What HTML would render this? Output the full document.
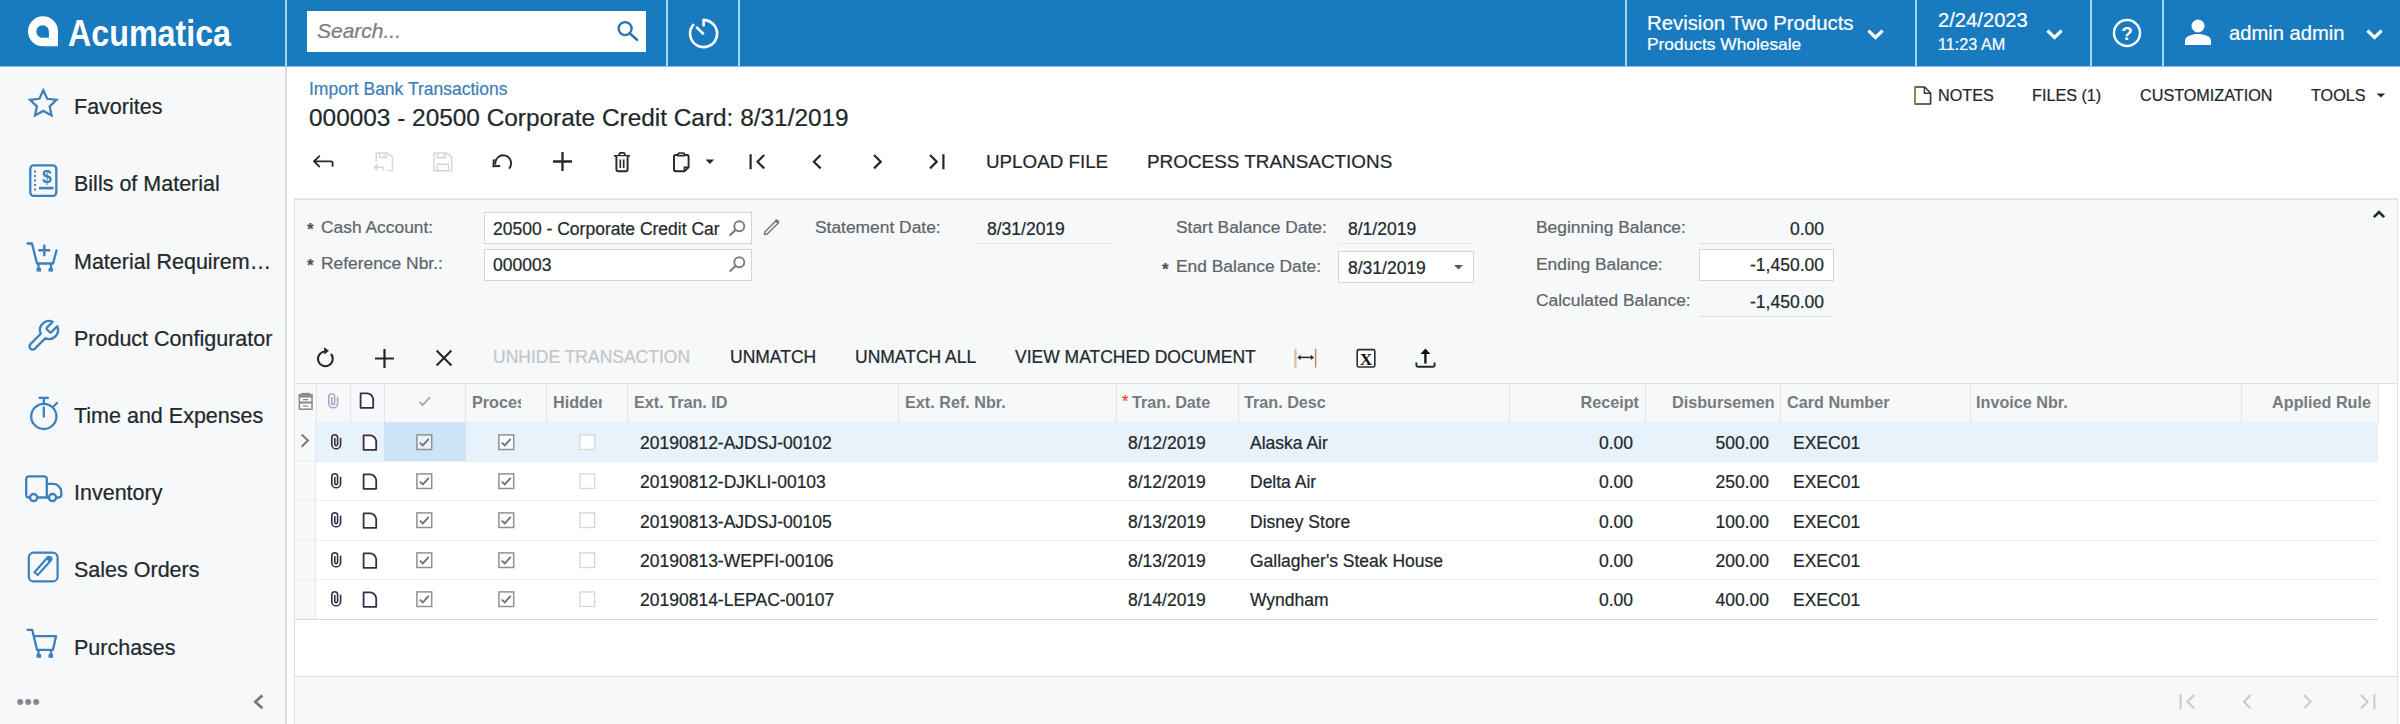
<!DOCTYPE html>
<html>
<head>
<meta charset="utf-8">
<title>Import Bank Transactions</title>
<style>
*{box-sizing:border-box;margin:0;padding:0}
html,body{width:2400px;height:724px;overflow:hidden;background:#fff}
body{font-family:"Liberation Sans",sans-serif;color:#23282c;position:relative}
.abs{position:absolute}
.t{position:absolute;white-space:nowrap;line-height:1;-webkit-text-stroke:0.22px currentColor}
svg{position:absolute;overflow:visible}
/* header */
#hdr{position:absolute;left:0;top:0;width:2400px;height:67px;background:#187abf;border-bottom:1px solid #8bbcdf}
.vsep{position:absolute;top:0;width:2px;height:66px;background:#a4d6f6}
.hw{color:#fff}
/* sidebar */
#side{position:absolute;left:0;top:67px;width:287px;height:657px;background:#f6f8fa;border-right:2px solid #dbdcde}
.nav{font-size:21.5px;color:#23282c}
/* main */
.lbl{font-size:17.4px;color:#5f6469}
.val{font-size:17.5px;color:#23282c}
.btn{font-size:17.5px;color:#23282c}
.inp{position:absolute;background:#fff;border:1px solid #d2d6da}
.dot{position:absolute;height:0;border-top:1px dotted #d3d6d9}
.gh{font-size:16.2px;font-weight:bold;color:#777b7f;-webkit-text-stroke:0 transparent}
.cell{font-size:17.5px;color:#23282c}
.cs{position:absolute;top:384px;width:1px;height:38px;background:#e3e6e9}
.rowline{position:absolute;left:294px;width:2084px;height:1px;background:#e8eef3}
</style>
</head>
<body>

<!-- ================= HEADER ================= -->
<div id="hdr">
  <div class="vsep" style="left:285px"></div>
  <div class="vsep" style="left:666px"></div>
  <div class="vsep" style="left:738px"></div>
  <div class="vsep" style="left:1625px"></div>
  <div class="vsep" style="left:1915px"></div>
  <div class="vsep" style="left:2090px"></div>
  <div class="vsep" style="left:2162px"></div>

  <!-- logo -->
  <svg style="left:27px;top:16px" width="32" height="31" viewBox="0 0 32 31">
    <path d="M16 0.3 A15 15 0 0 1 31 15.3 V30.3 H16 A15 15 0 0 1 16 0.3 Z" fill="#fff"/>
    <path d="M15.6 9.2 A6.3 6.3 0 0 1 21.9 15.5 V21.8 H15.6 A6.3 6.3 0 0 1 15.6 9.2 Z" fill="#187abf"/>
  </svg>
  <svg style="left:68px;top:14px" width="166" height="40" viewBox="0 0 166 40">
    <text x="0" y="32" font-family="Liberation Sans, sans-serif" font-weight="bold" font-size="37" fill="#fff" textLength="163" lengthAdjust="spacingAndGlyphs">Acumatica</text>
  </svg>

  <!-- search -->
  <div class="abs" style="left:307px;top:11px;width:339px;height:41px;background:#fff"></div>
  <div class="t" style="left:317px;top:20px;font-size:21px;font-style:italic;color:#7b7f83">Search...</div>
  <svg style="left:616px;top:19px" width="26" height="26" viewBox="0 0 26 26">
    <circle cx="9.1" cy="9.6" r="6.5" fill="none" stroke="#2f72ad" stroke-width="2.4"/>
    <path d="M13.8 14.4 L21 20.8" stroke="#2f72ad" stroke-width="2.6" stroke-linecap="round"/>
  </svg>

  <!-- clock -->
  <svg style="left:688px;top:17px" width="32" height="32" viewBox="0 0 32 32">
    <path d="M15.6 3.1 A13.5 13.5 0 1 1 6 7.1" fill="none" stroke="#fff" stroke-width="2.6" stroke-linecap="butt"/>
    <path d="M15.6 1.8 V9.4" stroke="#fff" stroke-width="2.6"/>
    <path d="M8.2 10 L15.8 17.2" stroke="#fff" stroke-width="2.6" stroke-linecap="butt"/>
  </svg>

  <!-- company -->
  <div class="t hw" style="left:1647px;top:13px;font-size:20.35px">Revision Two Products</div>
  <div class="t hw" style="left:1647px;top:36px;font-size:17.35px">Products Wholesale</div>
  <svg style="left:1866px;top:29px" width="20" height="12" viewBox="0 0 20 12"><path d="M2.4 1.6 L9.5 8.4 L16.6 1.6" fill="none" stroke="#fff" stroke-width="3.3" stroke-linecap="butt" stroke-linejoin="miter"/></svg>

  <!-- date -->
  <div class="t hw" style="left:1938px;top:10px;font-size:20.2px">2/24/2023</div>
  <div class="t hw" style="left:1938px;top:36px;font-size:16.2px">11:23 AM</div>
  <svg style="left:2045px;top:29px" width="20" height="12" viewBox="0 0 20 12"><path d="M2.4 1.6 L9.5 8.4 L16.6 1.6" fill="none" stroke="#fff" stroke-width="3.3" stroke-linecap="butt" stroke-linejoin="miter"/></svg>

  <!-- help -->
  <svg style="left:2112px;top:18px" width="30" height="30" viewBox="0 0 30 30">
    <circle cx="15" cy="15" r="13" fill="none" stroke="#fff" stroke-width="2.4"/>
    <text x="15" y="22" text-anchor="middle" font-family="Liberation Sans, sans-serif" font-weight="bold" font-size="19" fill="#fff">?</text>
  </svg>

  <!-- user -->
  <svg style="left:2184px;top:19px" width="28" height="26" viewBox="0 0 28 26">
    <circle cx="14" cy="7" r="6.5" fill="#fff"/>
    <path d="M1 26 L1 22 C1 17 8 15 14 15 C20 15 27 17 27 22 L27 26 Z" fill="#fff"/>
  </svg>
  <div class="t hw" style="left:2229px;top:23px;font-size:20.2px">admin admin</div>
  <svg style="left:2365px;top:29px" width="20" height="12" viewBox="0 0 20 12"><path d="M2.4 1.6 L9.5 8.4 L16.6 1.6" fill="none" stroke="#fff" stroke-width="3.3" stroke-linecap="butt" stroke-linejoin="miter"/></svg>
</div>

<!-- ================= SIDEBAR ================= -->
<div id="side"></div>
<div id="navitems">
  <div class="t nav" style="left:74px;top:97px">Favorites</div>
  <div class="t nav" style="left:74px;top:174px">Bills of Material</div>
  <div class="t nav" style="left:74px;top:252px">Material Requirem…</div>
  <div class="t nav" style="left:74px;top:329px">Product Configurator</div>
  <div class="t nav" style="left:74px;top:406px">Time and Expenses</div>
  <div class="t nav" style="left:74px;top:483px">Inventory</div>
  <div class="t nav" style="left:74px;top:560px">Sales Orders</div>
  <div class="t nav" style="left:74px;top:638px">Purchases</div>
</div>


<!-- SIDE-ICONS-START -->
<div id="sideicons">
  <!-- star -->
  <svg style="left:27px;top:87px" width="33" height="32" viewBox="0 0 33 32">
    <path d="M16.3 3.3 L20.2 11.8 L29.5 12.9 L22.7 19.3 L24.5 28.4 L16.3 23.9 L8.1 28.4 L9.9 19.3 L3.1 12.9 L12.4 11.8 Z" fill="none" stroke="#3c80bd" stroke-width="2.3" stroke-linejoin="miter"/>
  </svg>
  <!-- bills of material -->
  <svg style="left:28px;top:163px" width="31" height="35" viewBox="0 0 31 35">
    <rect x="2.3" y="2.4" width="26" height="30.5" rx="3.5" fill="none" stroke="#3c80bd" stroke-width="2.3"/>
    <g fill="#3c80bd"><rect x="6" y="7.5" width="2" height="2"/><rect x="6" y="12" width="2" height="2"/><rect x="6" y="16.5" width="2" height="2"/><rect x="6" y="21" width="2" height="2"/><rect x="6" y="25.5" width="2" height="2"/></g>
    <text x="18.8" y="20.4" text-anchor="middle" font-family="Liberation Sans, sans-serif" font-weight="bold" font-size="17.5" fill="#3c80bd">$</text>
    <rect x="11" y="23.8" width="14.5" height="2.6" fill="#3c80bd"/>
  </svg>
  <!-- material requirements: cart with plus -->
  <svg style="left:26px;top:241px" width="34" height="32" viewBox="0 0 34 32">
    <path d="M1.5 2.5 H6 L11 22.5 H27 L30.5 9.5" fill="none" stroke="#3c80bd" stroke-width="2.3" stroke-linejoin="round" stroke-linecap="round"/>
    <path d="M18.3 3.4 V15.2 M12.4 9.3 H24.2" stroke="#3c80bd" stroke-width="2.4" fill="none"/>
    <path d="M12.5 23 V28 M25 23 V28" stroke="#3c80bd" stroke-width="2.3"/>
    <rect x="10.5" y="27" width="4.5" height="3.6" fill="#3c80bd"/><rect x="22.5" y="27" width="4.5" height="3.6" fill="#3c80bd"/>
  </svg>
  <!-- wrench -->
  <svg style="left:24.5px;top:318px" width="36" height="36" viewBox="0 0 24 24">
    <path d="M14.7 6.3a1 1 0 0 0 0 1.4l1.6 1.6a1 1 0 0 0 1.4 0l3.77-3.77a6 6 0 0 1-7.94 7.94l-6.91 6.91a2.12 2.12 0 0 1-3-3l6.91-6.91a6 6 0 0 1 7.94-7.94l-3.76 3.76z" fill="none" stroke="#3c80bd" stroke-width="1.55" stroke-linejoin="round" stroke-linecap="round"/>
  </svg>
  <!-- stopwatch -->
  <svg style="left:27px;top:395px" width="34" height="36" viewBox="0 0 34 36">
    <circle cx="16.8" cy="21.4" r="12.6" fill="none" stroke="#3c80bd" stroke-width="2.3"/>
    <path d="M12.5 2.8 H21 M16.8 2.8 V8.5 M16.8 12.5 V21.5 M26.5 11.5 L30 8" stroke="#3c80bd" stroke-width="2.3" fill="none" stroke-linecap="round"/>
  </svg>
  <!-- truck -->
  <svg style="left:24px;top:474px" width="40" height="30" viewBox="0 0 40 30">
    <path d="M5.2 23.5 H4.5 A2.6 2.6 0 0 1 2.2 21 V5 A2.6 2.6 0 0 1 4.8 2.4 H20.2 A2.6 2.6 0 0 1 22.8 5 V23.5 H14" fill="none" stroke="#3c80bd" stroke-width="2.3" stroke-linejoin="round"/>
    <path d="M22.8 9.8 H29.5 C34 9.8 37.3 14 37.3 18.5 V21 A2.5 2.5 0 0 1 34.8 23.5 H33 M24 23.5 H22.8" fill="none" stroke="#3c80bd" stroke-width="2.3"/>
    <circle cx="9.6" cy="23.6" r="3.6" fill="none" stroke="#3c80bd" stroke-width="2.3"/>
    <circle cx="28.5" cy="23.6" r="3.6" fill="none" stroke="#3c80bd" stroke-width="2.3"/>
  </svg>
  <!-- sales orders -->
  <svg style="left:26px;top:550px" width="34" height="34" viewBox="0 0 34 34">
    <rect x="2.8" y="2.6" width="28.8" height="28.8" rx="5" fill="none" stroke="#3c80bd" stroke-width="2.2"/>
    <path d="M9.5 24.5 L22.5 9.8 A2.2 2.2 0 0 1 25.8 12.8 L12.8 27.3 Z" fill="none" stroke="#3c80bd" stroke-width="2.1" stroke-linejoin="round" transform="translate(-1 -2.3)"/>
    <path d="M21.2 8.6 L24.6 11.6" stroke="#3c80bd" stroke-width="3.2" transform="translate(-0.5 -1)"/>
  </svg>
  <!-- purchases cart -->
  <svg style="left:26px;top:627px" width="34" height="32" viewBox="0 0 34 32">
    <path d="M1.5 2.8 H6.2 L11 22.8 H27 L30 9.2 H8" fill="none" stroke="#3c80bd" stroke-width="2.3" stroke-linejoin="round" stroke-linecap="round"/>
    <path d="M12.5 23 V28 M25 23 V28" stroke="#3c80bd" stroke-width="2.3"/>
    <rect x="10.5" y="27" width="4.5" height="3.8" fill="#3c80bd"/><rect x="22.5" y="27" width="4.5" height="3.8" fill="#3c80bd"/>
  </svg>
  <!-- dots + collapse -->
  <svg style="left:17px;top:698px" width="24" height="8" viewBox="0 0 24 8"><circle cx="3.2" cy="4" r="3" fill="#85898e"/><circle cx="11.2" cy="4" r="3" fill="#85898e"/><circle cx="19.2" cy="4" r="3" fill="#85898e"/></svg>
  <svg style="left:252px;top:692px" width="14" height="20" viewBox="0 0 14 20"><path d="M10.4 3.4 L3.4 9.8 L10.4 16.2" fill="none" stroke="#777b80" stroke-width="2.8" stroke-linecap="butt" stroke-linejoin="miter"/></svg>
</div>
<!-- SIDE-ICONS-END -->

<!-- ================= MAIN ================= -->
<div id="main">
  <div class="t" style="left:309px;top:81px;font-size:17.5px;color:#3c7fb8">Import Bank Transactions</div>
  <div class="t" style="left:309px;top:106px;font-size:24.4px;color:#23282c">000003 - 20500 Corporate Credit Card: 8/31/2019</div>

  <!-- right top buttons -->
  <div class="t" style="left:1938px;top:87px;font-size:16.2px">NOTES</div>
  <div class="t" style="left:2032px;top:87px;font-size:16.2px">FILES (1)</div>
  <div class="t" style="left:2140px;top:87px;font-size:16.2px">CUSTOMIZATION</div>
  <div class="t" style="left:2311px;top:87px;font-size:16.2px">TOOLS</div>

  <!-- toolbar text -->
  <div class="t" style="left:986px;top:153px;font-size:18.8px">UPLOAD FILE</div>
  <div class="t" style="left:1147px;top:153px;font-size:18.9px">PROCESS TRANSACTIONS</div>
</div>

<!-- ================= FORM PANEL ================= -->
<div class="abs" style="left:294px;top:198px;width:2104px;height:526px;background:#f6f8fa;border:1px solid #dfe2e5;border-bottom:none;border-top:2px solid #e1e3e6"></div>

<div id="form">
  <div class="t lbl" style="left:307px;top:221px;font-size:17px;font-weight:bold;color:#4d5155">*</div>
  <div class="t lbl" style="left:321px;top:219px">Cash Account:</div>
  <div class="inp" style="left:484px;top:212px;width:268px;height:32px"></div>
  <div class="t val" style="left:493px;top:221px">20500 - Corporate Credit Car</div>

  <div class="t lbl" style="left:307px;top:257px;font-size:17px;font-weight:bold;color:#4d5155">*</div>
  <div class="t lbl" style="left:321px;top:255px">Reference Nbr.:</div>
  <div class="inp" style="left:484px;top:249px;width:268px;height:32px"></div>
  <div class="t val" style="left:493px;top:257px">000003</div>

  <div class="t lbl" style="left:815px;top:219px">Statement Date:</div>
  <div class="t val" style="left:987px;top:221px">8/31/2019</div>
  <div class="dot" style="left:977px;top:243px;width:135px"></div>

  <div class="t lbl" style="left:1176px;top:219px">Start Balance Date:</div>
  <div class="t val" style="left:1348px;top:221px">8/1/2019</div>
  <div class="dot" style="left:1338px;top:243px;width:135px"></div>

  <div class="t lbl" style="left:1162px;top:261px;font-size:17px;font-weight:bold;color:#4d5155">*</div>
  <div class="t lbl" style="left:1176px;top:258px">End Balance Date:</div>
  <div class="inp" style="left:1338px;top:251px;width:136px;height:32px"></div>
  <div class="t val" style="left:1348px;top:260px">8/31/2019</div>

  <div class="t lbl" style="left:1536px;top:219px">Beginning Balance:</div>
  <div class="t val" style="right:576px;top:221px">0.00</div>
  <div class="dot" style="left:1699px;top:243px;width:135px;border-top-style:solid;border-color:#dfe2e5"></div>

  <div class="t lbl" style="left:1536px;top:256px">Ending Balance:</div>
  <div class="inp" style="left:1699px;top:249px;width:135px;height:32px"></div>
  <div class="t val" style="right:576px;top:257px">-1,450.00</div>

  <div class="t lbl" style="left:1536px;top:292px">Calculated Balance:</div>
  <div class="t val" style="right:576px;top:294px">-1,450.00</div>
  <div class="dot" style="left:1699px;top:316px;width:135px;border-top-style:solid;border-color:#dfe2e5"></div>
</div>

<!-- ================= GRID TOOLBAR ================= -->
<div id="gtb">
  <div class="t btn" style="left:493px;top:349px;color:#c3c6c9">UNHIDE TRANSACTION</div>
  <div class="t btn" style="left:730px;top:349px">UNMATCH</div>
  <div class="t btn" style="left:855px;top:349px">UNMATCH ALL</div>
  <div class="t btn" style="left:1015px;top:349px">VIEW MATCHED DOCUMENT</div>
</div>

<!-- ================= GRID ================= -->
<div id="grid">
  <!-- white body -->
  <div class="abs" style="left:295px;top:383px;width:2102px;height:293px;background:#fff"></div>
  <!-- header -->
  <div class="abs" style="left:295px;top:383px;width:2083px;height:39px;background:#f6f8fa;border-top:1px solid #dfe2e5"></div>
  <!-- indicator column -->
  <div class="abs" style="left:295px;top:422px;width:21px;height:197px;background:#f6f8fa;border-right:1px solid #e6e9ec"></div>
  <!-- selected row -->
  <div class="abs" style="left:316px;top:422px;width:2062px;height:40px;background:#e7f2fb"></div>
  <div class="abs" style="left:384px;top:422px;width:82px;height:40px;background:#cde4f7"></div>
  <!-- bottom lines -->
  <div class="abs" style="left:295px;top:619px;width:2083px;height:1px;background:#d5d8db"></div>
  <div class="abs" style="left:295px;top:676px;width:2102px;height:1px;background:#dfe2e5"></div>
  <div class="abs" style="left:2378px;top:383px;width:1px;height:39px;background:#e1e4e7"></div>
  <div class="abs" style="left:2378px;top:383px;width:19px;height:1px;background:#dfe2e5"></div>
</div>

<!-- GRID-CONTENT-START -->
<div id="gridc">
<div class="cs" style="left:316px"></div>
<div class="cs" style="left:350px"></div>
<div class="cs" style="left:384px"></div>
<div class="cs" style="left:465px"></div>
<div class="cs" style="left:546px"></div>
<div class="cs" style="left:627px"></div>
<div class="cs" style="left:898px"></div>
<div class="cs" style="left:1116px"></div>
<div class="cs" style="left:1238px"></div>
<div class="cs" style="left:1509px"></div>
<div class="cs" style="left:1645px"></div>
<div class="cs" style="left:1780px"></div>
<div class="cs" style="left:1970px"></div>
<div class="cs" style="left:2241px"></div>
<div class="abs" style="left:465px;top:384px;width:56px;height:38px;overflow:hidden"><div class="t gh" style="left:7px;top:10px">Processed</div></div>
<div class="abs" style="left:546px;top:384px;width:56px;height:38px;overflow:hidden"><div class="t gh" style="left:7px;top:10px">Hidden</div></div>
<div class="t gh" style="left:634px;top:394px;">Ext. Tran. ID</div>
<div class="t gh" style="left:905px;top:394px;">Ext. Ref. Nbr.</div>
<div class="t" style="left:1122px;top:393px;font-size:16.5px;color:#e0442e">*</div>
<div class="t gh" style="left:1132px;top:394px;">Tran. Date</div>
<div class="t gh" style="left:1244px;top:394px;">Tran. Desc</div>
<div class="t gh" style="right:761px;top:394px">Receipt</div>
<div class="abs" style="left:1645px;top:384px;width:128.5px;height:38px;overflow:hidden"><div class="t gh" style="left:27px;top:10px">Disbursement</div></div>
<div class="t gh" style="left:1787px;top:394px;">Card Number</div>
<div class="t gh" style="left:1976px;top:394px;">Invoice Nbr.</div>
<div class="t gh" style="right:29px;top:394px">Applied Rule</div>
<svg style="left:298px;top:392px" width="16" height="19" viewBox="0 0 16 19"><rect x="1.4" y="2.6" width="12.6" height="14.6" fill="#fff" stroke="#8a8e92" stroke-width="1.6"/><rect x="3.6" y="0.8" width="8.2" height="2.4" fill="#8a8e92"/><rect x="1.4" y="2.6" width="12.6" height="3" fill="#8a8e92"/><rect x="1.4" y="9.4" width="12.6" height="2.2" fill="#8a8e92"/><rect x="5" y="7" width="5.4" height="1.3" fill="#8a8e92"/><rect x="5" y="13.4" width="5.4" height="1.3" fill="#8a8e92"/></svg>
<svg style="left:326.6px;top:392.4px" width="13" height="18" viewBox="0 0 13 18"><path d="M10.6 5.4 V11.4 A4.4 4.4 0 0 1 1.8 11.4 V4.6 A2.9 2.9 0 0 1 7.6 4.6 V11.2 A1.4 1.4 0 0 1 4.8 11.2 V5.6" fill="none" stroke="#b4a3c2" stroke-width="1.6" stroke-linecap="round"/></svg>
<svg style="left:359.4px;top:392.2px" width="16" height="18" viewBox="0 0 16 18"><path d="M1.6 1.4 H8.6 C11.6 2 13.6 4 14.2 7 V15.8 H1.6 Z" fill="#fff" stroke="#3b2d45" stroke-width="1.8" stroke-linejoin="round"/></svg>
<svg style="left:418px;top:395px" width="14" height="13" viewBox="0 0 14 13"><path d="M1.4 6.8 L4.8 10 L12 2.2" fill="none" stroke="#a3a7ab" stroke-width="1.8"/></svg>
<svg style="left:299px;top:432px" width="12" height="17" viewBox="0 0 12 17"><path d="M2.6 2.4 L9 8.6 L2.6 14.8" fill="none" stroke="#7a7e82" stroke-width="2.1"/></svg>
<svg style="left:329.6px;top:432.9px" width="13" height="18" viewBox="0 0 13 18"><path d="M10.6 5.4 V11.4 A4.4 4.4 0 0 1 1.8 11.4 V4.6 A2.9 2.9 0 0 1 7.6 4.6 V11.2 A1.4 1.4 0 0 1 4.8 11.2 V5.6" fill="none" stroke="#3b2d45" stroke-width="1.6" stroke-linecap="round"/></svg>
<svg style="left:361.8px;top:433.7px" width="16" height="18" viewBox="0 0 16 18"><path d="M1.6 1.4 H8.6 C11.6 2 13.6 4 14.2 7 V15.8 H1.6 Z" fill="#fff" stroke="#3b2d45" stroke-width="1.8" stroke-linejoin="round"/></svg>
<svg style="left:416.2px;top:433.7px" width="17" height="17" viewBox="0 0 17 17"><rect x="0.9" y="0.9" width="14.8" height="14.6" fill="rgba(255,255,255,0.55)" stroke="#8e9296" stroke-width="1.5"/><path d="M3.8 8.6 L6.8 11.4 L12.8 4.8" fill="none" stroke="#6f7377" stroke-width="1.8"/></svg>
<svg style="left:497.6px;top:433.7px" width="17" height="17" viewBox="0 0 17 17"><rect x="0.9" y="0.9" width="14.8" height="14.6" fill="#fff" stroke="#8e9296" stroke-width="1.5"/><path d="M3.8 8.6 L6.8 11.4 L12.8 4.8" fill="none" stroke="#6f7377" stroke-width="1.8"/></svg>
<svg style="left:578.8px;top:433.7px" width="17" height="17" viewBox="0 0 17 17"><rect x="0.9" y="0.9" width="14.8" height="14.6" fill="#fff" stroke="#d6d9dc" stroke-width="1.4"/></svg>
<div class="t cell" style="left:640px;top:435px">20190812-AJDSJ-00102</div>
<div class="t cell" style="left:1128px;top:435px">8/12/2019</div>
<div class="t cell" style="left:1250px;top:435px">Alaska Air</div>
<div class="t cell" style="right:767px;top:435px">0.00</div>
<div class="t cell" style="right:631px;top:435px">500.00</div>
<div class="t cell" style="left:1793px;top:435px">EXEC01</div>
<div class="rowline" style="top:461px"></div>
<svg style="left:329.6px;top:472.1px" width="13" height="18" viewBox="0 0 13 18"><path d="M10.6 5.4 V11.4 A4.4 4.4 0 0 1 1.8 11.4 V4.6 A2.9 2.9 0 0 1 7.6 4.6 V11.2 A1.4 1.4 0 0 1 4.8 11.2 V5.6" fill="none" stroke="#3b2d45" stroke-width="1.6" stroke-linecap="round"/></svg>
<svg style="left:361.8px;top:472.90000000000003px" width="16" height="18" viewBox="0 0 16 18"><path d="M1.6 1.4 H8.6 C11.6 2 13.6 4 14.2 7 V15.8 H1.6 Z" fill="#fff" stroke="#3b2d45" stroke-width="1.8" stroke-linejoin="round"/></svg>
<svg style="left:416.2px;top:472.90000000000003px" width="17" height="17" viewBox="0 0 17 17"><rect x="0.9" y="0.9" width="14.8" height="14.6" fill="#fff" stroke="#8e9296" stroke-width="1.5"/><path d="M3.8 8.6 L6.8 11.4 L12.8 4.8" fill="none" stroke="#6f7377" stroke-width="1.8"/></svg>
<svg style="left:497.6px;top:472.90000000000003px" width="17" height="17" viewBox="0 0 17 17"><rect x="0.9" y="0.9" width="14.8" height="14.6" fill="#fff" stroke="#8e9296" stroke-width="1.5"/><path d="M3.8 8.6 L6.8 11.4 L12.8 4.8" fill="none" stroke="#6f7377" stroke-width="1.8"/></svg>
<svg style="left:578.8px;top:472.90000000000003px" width="17" height="17" viewBox="0 0 17 17"><rect x="0.9" y="0.9" width="14.8" height="14.6" fill="#fff" stroke="#d6d9dc" stroke-width="1.4"/></svg>
<div class="t cell" style="left:640px;top:474px">20190812-DJKLI-00103</div>
<div class="t cell" style="left:1128px;top:474px">8/12/2019</div>
<div class="t cell" style="left:1250px;top:474px">Delta Air</div>
<div class="t cell" style="right:767px;top:474px">0.00</div>
<div class="t cell" style="right:631px;top:474px">250.00</div>
<div class="t cell" style="left:1793px;top:474px">EXEC01</div>
<div class="rowline" style="top:500px"></div>
<svg style="left:329.6px;top:511.4px" width="13" height="18" viewBox="0 0 13 18"><path d="M10.6 5.4 V11.4 A4.4 4.4 0 0 1 1.8 11.4 V4.6 A2.9 2.9 0 0 1 7.6 4.6 V11.2 A1.4 1.4 0 0 1 4.8 11.2 V5.6" fill="none" stroke="#3b2d45" stroke-width="1.6" stroke-linecap="round"/></svg>
<svg style="left:361.8px;top:512.1999999999999px" width="16" height="18" viewBox="0 0 16 18"><path d="M1.6 1.4 H8.6 C11.6 2 13.6 4 14.2 7 V15.8 H1.6 Z" fill="#fff" stroke="#3b2d45" stroke-width="1.8" stroke-linejoin="round"/></svg>
<svg style="left:416.2px;top:512.1999999999999px" width="17" height="17" viewBox="0 0 17 17"><rect x="0.9" y="0.9" width="14.8" height="14.6" fill="#fff" stroke="#8e9296" stroke-width="1.5"/><path d="M3.8 8.6 L6.8 11.4 L12.8 4.8" fill="none" stroke="#6f7377" stroke-width="1.8"/></svg>
<svg style="left:497.6px;top:512.1999999999999px" width="17" height="17" viewBox="0 0 17 17"><rect x="0.9" y="0.9" width="14.8" height="14.6" fill="#fff" stroke="#8e9296" stroke-width="1.5"/><path d="M3.8 8.6 L6.8 11.4 L12.8 4.8" fill="none" stroke="#6f7377" stroke-width="1.8"/></svg>
<svg style="left:578.8px;top:512.1999999999999px" width="17" height="17" viewBox="0 0 17 17"><rect x="0.9" y="0.9" width="14.8" height="14.6" fill="#fff" stroke="#d6d9dc" stroke-width="1.4"/></svg>
<div class="t cell" style="left:640px;top:514px">20190813-AJDSJ-00105</div>
<div class="t cell" style="left:1128px;top:514px">8/13/2019</div>
<div class="t cell" style="left:1250px;top:514px">Disney Store</div>
<div class="t cell" style="right:767px;top:514px">0.00</div>
<div class="t cell" style="right:631px;top:514px">100.00</div>
<div class="t cell" style="left:1793px;top:514px">EXEC01</div>
<div class="rowline" style="top:540px"></div>
<svg style="left:329.6px;top:550.8px" width="13" height="18" viewBox="0 0 13 18"><path d="M10.6 5.4 V11.4 A4.4 4.4 0 0 1 1.8 11.4 V4.6 A2.9 2.9 0 0 1 7.6 4.6 V11.2 A1.4 1.4 0 0 1 4.8 11.2 V5.6" fill="none" stroke="#3b2d45" stroke-width="1.6" stroke-linecap="round"/></svg>
<svg style="left:361.8px;top:551.5999999999999px" width="16" height="18" viewBox="0 0 16 18"><path d="M1.6 1.4 H8.6 C11.6 2 13.6 4 14.2 7 V15.8 H1.6 Z" fill="#fff" stroke="#3b2d45" stroke-width="1.8" stroke-linejoin="round"/></svg>
<svg style="left:416.2px;top:551.5999999999999px" width="17" height="17" viewBox="0 0 17 17"><rect x="0.9" y="0.9" width="14.8" height="14.6" fill="#fff" stroke="#8e9296" stroke-width="1.5"/><path d="M3.8 8.6 L6.8 11.4 L12.8 4.8" fill="none" stroke="#6f7377" stroke-width="1.8"/></svg>
<svg style="left:497.6px;top:551.5999999999999px" width="17" height="17" viewBox="0 0 17 17"><rect x="0.9" y="0.9" width="14.8" height="14.6" fill="#fff" stroke="#8e9296" stroke-width="1.5"/><path d="M3.8 8.6 L6.8 11.4 L12.8 4.8" fill="none" stroke="#6f7377" stroke-width="1.8"/></svg>
<svg style="left:578.8px;top:551.5999999999999px" width="17" height="17" viewBox="0 0 17 17"><rect x="0.9" y="0.9" width="14.8" height="14.6" fill="#fff" stroke="#d6d9dc" stroke-width="1.4"/></svg>
<div class="t cell" style="left:640px;top:553px">20190813-WEPFI-00106</div>
<div class="t cell" style="left:1128px;top:553px">8/13/2019</div>
<div class="t cell" style="left:1250px;top:553px">Gallagher's Steak House</div>
<div class="t cell" style="right:767px;top:553px">0.00</div>
<div class="t cell" style="right:631px;top:553px">200.00</div>
<div class="t cell" style="left:1793px;top:553px">EXEC01</div>
<div class="rowline" style="top:579px"></div>
<svg style="left:329.6px;top:590.1px" width="13" height="18" viewBox="0 0 13 18"><path d="M10.6 5.4 V11.4 A4.4 4.4 0 0 1 1.8 11.4 V4.6 A2.9 2.9 0 0 1 7.6 4.6 V11.2 A1.4 1.4 0 0 1 4.8 11.2 V5.6" fill="none" stroke="#3b2d45" stroke-width="1.6" stroke-linecap="round"/></svg>
<svg style="left:361.8px;top:590.9px" width="16" height="18" viewBox="0 0 16 18"><path d="M1.6 1.4 H8.6 C11.6 2 13.6 4 14.2 7 V15.8 H1.6 Z" fill="#fff" stroke="#3b2d45" stroke-width="1.8" stroke-linejoin="round"/></svg>
<svg style="left:416.2px;top:590.9px" width="17" height="17" viewBox="0 0 17 17"><rect x="0.9" y="0.9" width="14.8" height="14.6" fill="#fff" stroke="#8e9296" stroke-width="1.5"/><path d="M3.8 8.6 L6.8 11.4 L12.8 4.8" fill="none" stroke="#6f7377" stroke-width="1.8"/></svg>
<svg style="left:497.6px;top:590.9px" width="17" height="17" viewBox="0 0 17 17"><rect x="0.9" y="0.9" width="14.8" height="14.6" fill="#fff" stroke="#8e9296" stroke-width="1.5"/><path d="M3.8 8.6 L6.8 11.4 L12.8 4.8" fill="none" stroke="#6f7377" stroke-width="1.8"/></svg>
<svg style="left:578.8px;top:590.9px" width="17" height="17" viewBox="0 0 17 17"><rect x="0.9" y="0.9" width="14.8" height="14.6" fill="#fff" stroke="#d6d9dc" stroke-width="1.4"/></svg>
<div class="t cell" style="left:640px;top:592px">20190814-LEPAC-00107</div>
<div class="t cell" style="left:1128px;top:592px">8/14/2019</div>
<div class="t cell" style="left:1250px;top:592px">Wyndham</div>
<div class="t cell" style="right:767px;top:592px">0.00</div>
<div class="t cell" style="right:631px;top:592px">400.00</div>
<div class="t cell" style="left:1793px;top:592px">EXEC01</div>
</div>
<!-- GRID-CONTENT-END -->

<!-- TB-ICONS-START -->
<div id="tbicons">
  <!-- back -->
  <svg style="left:312px;top:153px" width="24" height="18" viewBox="0 0 24 18">
    <path d="M7.8 2.6 L2 8.3 L7.8 14 M2.2 8.3 H19 A1.6 1.6 0 0 1 20.6 9.9 V13.8" fill="none" stroke="#23282c" stroke-width="1.8" stroke-linecap="butt" stroke-linejoin="miter"/>
  </svg>
  <!-- save & close (disabled) -->
  <svg style="left:372px;top:151px" width="23" height="22" viewBox="0 0 23 22">
    <path d="M4.2 11.5 V2 H15.5 L20.4 6.2 V19.6 H15.5" fill="none" stroke="#d3d6d9" stroke-width="1.4" stroke-linejoin="round"/>
    <path d="M7.5 2.2 V6.6 H14.5 V2.2 M12 3.4 V5.4" fill="none" stroke="#d3d6d9" stroke-width="1.4"/>
    <path d="M6 13.2 L2.2 16.2 L6 19.2 M2.6 16.2 H11.5 V19.8" fill="none" stroke="#d3d6d9" stroke-width="1.4" stroke-linejoin="round"/>
  </svg>
  <!-- save (disabled) -->
  <svg style="left:432px;top:151px" width="22" height="22" viewBox="0 0 22 22">
    <path d="M2 2 H14.6 L19.8 6.4 V19.8 H2 Z" fill="none" stroke="#d3d6d9" stroke-width="1.4" stroke-linejoin="round"/>
    <path d="M5.6 2.2 V6.8 H13.4 V2.2 M10.8 3.4 V5.6" fill="none" stroke="#d3d6d9" stroke-width="1.4"/>
    <path d="M5.4 19.6 V13.2 H16.4 V19.6" fill="none" stroke="#d3d6d9" stroke-width="1.4"/>
  </svg>
  <!-- undo -->
  <svg style="left:491px;top:152px" width="24" height="20" viewBox="0 0 24 20">
    <path d="M4.4 12.6 A7.9 7.9 0 1 1 18 16.6" fill="none" stroke="#23282c" stroke-width="1.9" stroke-linecap="butt"/>
    <path d="M2.8 7.4 L2.4 14.2 L9.2 14" fill="none" stroke="#23282c" stroke-width="1.9" stroke-linecap="butt" stroke-linejoin="miter"/>
  </svg>
  <!-- plus -->
  <svg style="left:552px;top:151px" width="21" height="21" viewBox="0 0 21 21"><path d="M10.5 1 V20 M1 10.5 H20" stroke="#23282c" stroke-width="2.3" fill="none"/></svg>
  <!-- trash -->
  <svg style="left:613px;top:151px" width="18" height="22" viewBox="0 0 18 22">
    <path d="M1.8 4.9 H16.2" stroke="#2b2430" stroke-width="1.9" stroke-linecap="round"/>
    <path d="M6.2 4.4 V3.2 A1.3 1.3 0 0 1 7.5 1.9 H10.5 A1.3 1.3 0 0 1 11.8 3.2 V4.4" fill="none" stroke="#2b2430" stroke-width="1.7"/>
    <path d="M3.4 5.2 V18.6 A1.7 1.7 0 0 0 5.1 20.3 H12.9 A1.7 1.7 0 0 0 14.6 18.6 V5.2" fill="#fbf8fd" stroke="#2b2430" stroke-width="1.9"/>
    <path d="M7.3 8.4 V17 M10.7 8.4 V17" stroke="#2b2430" stroke-width="1.6"/>
  </svg>
  <!-- clipboard -->
  <svg style="left:672px;top:151px" width="20" height="22" viewBox="0 0 20 22">
    <path d="M5.5 4 H3.6 A1.6 1.6 0 0 0 2 5.6 V18.6 A1.6 1.6 0 0 0 3.6 20.2 H12.4 L16.6 16.2 V5.6 A1.6 1.6 0 0 0 15 4 H13.2" fill="#fcfafd" stroke="#2b2430" stroke-width="1.9" stroke-linejoin="round"/>
    <path d="M6 4.6 V3.6 A1.6 1.6 0 0 1 7.6 2 H11 A1.6 1.6 0 0 1 12.6 3.6 V4.6 Z" fill="none" stroke="#23282c" stroke-width="1.7"/>
    <path d="M12.4 20 V16.2 H16.4" fill="none" stroke="#23282c" stroke-width="1.6"/>
  </svg>
  <svg style="left:705px;top:159px" width="10" height="6" viewBox="0 0 10 6"><path d="M0.6 0.4 H9.2 L4.9 4.9 Z" fill="#23282c"/></svg>
  <!-- first -->
  <svg style="left:748px;top:152px" width="20" height="20" viewBox="0 0 20 20"><path d="M2.6 2.2 V17.2 M16.2 3 L9.5 9.7 L16.2 16.4" fill="none" stroke="#23282c" stroke-width="2.2" stroke-linecap="butt"/></svg>
  <!-- prev -->
  <svg style="left:808px;top:152px" width="20" height="20" viewBox="0 0 20 20"><path d="M12.6 3 L5.9 9.7 L12.6 16.4" fill="none" stroke="#23282c" stroke-width="2.2"/></svg>
  <!-- next -->
  <svg style="left:867px;top:152px" width="20" height="20" viewBox="0 0 20 20"><path d="M7 3 L13.7 9.7 L7 16.4" fill="none" stroke="#23282c" stroke-width="2.2"/></svg>
  <!-- last -->
  <svg style="left:926px;top:152px" width="20" height="20" viewBox="0 0 20 20"><path d="M17.4 2.2 V17.2 M4 3 L10.7 9.7 L4 16.4" fill="none" stroke="#23282c" stroke-width="2.2"/></svg>

  <!-- notes icon -->
  <svg style="left:1913px;top:85px" width="20" height="21" viewBox="0 0 20 21">
    <path d="M2 2 H11.6 L17.6 8 V19 H2 Z" fill="#fff" stroke="#3a3530" stroke-width="1.6" stroke-linejoin="round"/>
    <path d="M11.4 2.2 V8.2 H17.4" fill="none" stroke="#3a3530" stroke-width="1.4"/>
    <path d="M2 2 V19" stroke="#a98c4a" stroke-width="1.6"/>
  </svg>
  <svg style="left:2376px;top:92.5px" width="10" height="6" viewBox="0 0 10 6"><path d="M0.6 0.4 H9.2 L4.9 4.6 Z" fill="#23282c"/></svg>

  <!-- collapse caret -->
  <svg style="left:2371px;top:208px" width="16" height="12" viewBox="0 0 16 12"><path d="M2.8 9.2 L8 4 L13.2 9.2" fill="none" stroke="#23282c" stroke-width="2.6"/></svg>

  <!-- form: magnifiers -->
  <svg style="left:727px;top:218px" width="20" height="20" viewBox="0 0 20 20"><circle cx="12.3" cy="8.2" r="5" fill="none" stroke="#7a7d80" stroke-width="1.9"/><path d="M8.6 12 L3.2 17" stroke="#7a7d80" stroke-width="2.1" stroke-linecap="round"/></svg>
  <svg style="left:727px;top:254px" width="20" height="20" viewBox="0 0 20 20"><circle cx="12.3" cy="8.2" r="5" fill="none" stroke="#7a7d80" stroke-width="1.9"/><path d="M8.6 12 L3.2 17" stroke="#7a7d80" stroke-width="2.1" stroke-linecap="round"/></svg>
  <!-- form: pencil -->
  <svg style="left:761px;top:218px" width="22" height="20" viewBox="0 0 22 20">
    <path d="M4 15.4 L14.8 4.6 A1.55 1.55 0 0 1 17 6.8 L6.2 17.6 L3.4 18 Z" fill="none" stroke="#7a7d80" stroke-width="1.6" stroke-linejoin="round" transform="translate(0 -1.6)"/>
    <path d="M14.2 4 L16.8 6.6" stroke="#6c6f72" stroke-width="2.2" transform="translate(0.4 -2)"/>
  </svg>
  <!-- form: date dropdown -->
  <svg style="left:1453px;top:264px" width="11" height="7" viewBox="0 0 11 7"><path d="M1 1 H10 L5.5 5.6 Z" fill="#55595d"/></svg>

  <!-- grid toolbar: refresh -->
  <svg style="left:314px;top:346px" width="24" height="24" viewBox="0 0 24 24">
    <path d="M11.6 5.6 A7.4 7.4 0 1 0 17 8.2" fill="none" stroke="#23282c" stroke-width="2" transform="translate(0 -0.2)"/>
    <path d="M9.6 1.4 L14.6 5 L10 8.8 Z" fill="#23282c" transform="translate(0.4 -0.2)"/>
  </svg>
  <svg style="left:374px;top:348px" width="21" height="21" viewBox="0 0 21 21"><path d="M10.5 1 V20 M1 10.5 H20" stroke="#23282c" stroke-width="2.2" fill="none"/></svg>
  <svg style="left:435px;top:349px" width="18" height="18" viewBox="0 0 18 18"><path d="M1.6 1.6 L16.4 16.4 M16.4 1.6 L1.6 16.4" stroke="#23282c" stroke-width="2.1" fill="none"/></svg>
  <!-- fit -->
  <svg style="left:1293px;top:348px" width="26" height="20" viewBox="0 0 26 20">
    <path d="M2.4 0.8 V19.6" stroke="#e3bd92" stroke-width="2.2"/><path d="M22.6 0.8 V19.6" stroke="#c98a58" stroke-width="1.5"/>
    <path d="M6 9.4 H19.5" stroke="#23282c" stroke-width="1.5"/>
    <path d="M4.4 9.4 L7.6 6.8 V12 Z M21 9.4 L17.8 6.8 V12 Z" fill="#23282c"/>
  </svg>
  <!-- excel -->
  <svg style="left:1355px;top:348px" width="22" height="21" viewBox="0 0 22 21">
    <rect x="2.2" y="1.6" width="17.6" height="17.4" rx="1.6" fill="#fff" stroke="#2b2b2b" stroke-width="1.6"/>
    <text x="11" y="16.6" text-anchor="middle" font-family="Liberation Serif, serif" font-weight="bold" font-size="17.5" fill="#111" textLength="12.6" lengthAdjust="spacingAndGlyphs">X</text>
  </svg>
  <!-- upload -->
  <svg style="left:1414px;top:347px" width="23" height="22" viewBox="0 0 23 22">
    <path d="M2.4 15.4 V18 A1.8 1.8 0 0 0 4.2 19.8 H18.8 A1.8 1.8 0 0 0 20.6 18 V15.4" fill="none" stroke="#23282c" stroke-width="1.9"/>
    <path d="M11.4 16.6 V6" stroke="#111" stroke-width="2.3"/>
    <path d="M11.4 1.6 L16.4 7 H6.4 Z" fill="#111"/>
  </svg>

  <!-- pager (disabled) -->
  <svg style="left:2178px;top:692px" width="20" height="20" viewBox="0 0 20 20"><path d="M2.6 2.2 V17.2 M16.2 3 L9.5 9.7 L16.2 16.4" fill="none" stroke="#c8cbce" stroke-width="2"/></svg>
  <svg style="left:2238px;top:692px" width="20" height="20" viewBox="0 0 20 20"><path d="M12.6 3 L5.9 9.7 L12.6 16.4" fill="none" stroke="#c8cbce" stroke-width="2"/></svg>
  <svg style="left:2297px;top:692px" width="20" height="20" viewBox="0 0 20 20"><path d="M7 3 L13.7 9.7 L7 16.4" fill="none" stroke="#c8cbce" stroke-width="2"/></svg>
  <svg style="left:2357px;top:692px" width="20" height="20" viewBox="0 0 20 20"><path d="M17.4 2.2 V17.2 M4 3 L10.7 9.7 L4 16.4" fill="none" stroke="#c8cbce" stroke-width="2"/></svg>
</div>
<!-- TB-ICONS-END -->

</body>
</html>
